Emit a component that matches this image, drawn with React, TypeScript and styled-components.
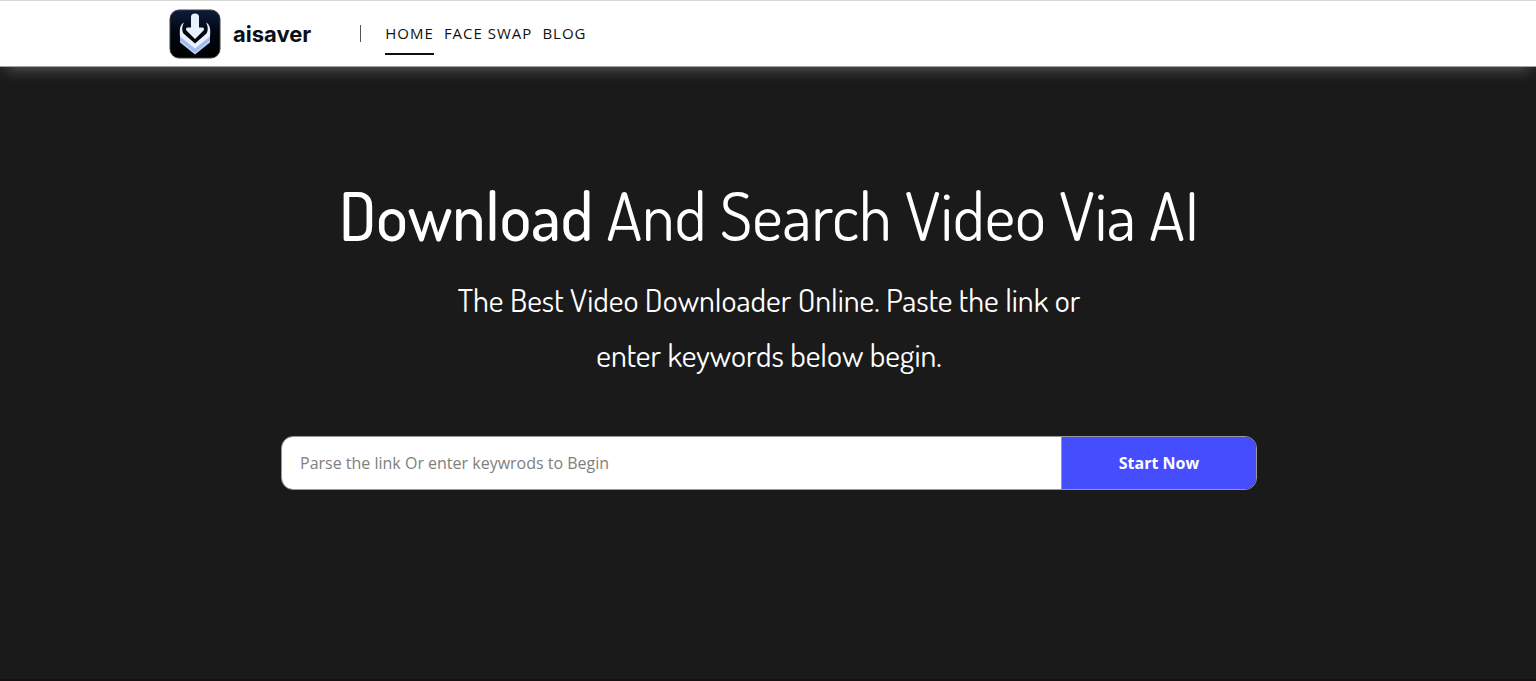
import React from "react";
import styled, { createGlobalStyle } from "styled-components";

const GlobalStyle = createGlobalStyle`
  *, *::before, *::after { box-sizing: border-box; }
  body {
    margin: 0;
    background: #1a1a1a;
    font-family: "Open Sans", sans-serif;
  }
  #root {
    display: flex;
    flex-direction: column;
    min-height: 100vh;
  }
`;

const Header = styled.header`
  position: relative;
  background: #fff;
  border-top: 1px solid #d6d6d6;
  border-bottom: 1px solid #a3a3a3;
  box-shadow: 0 8px 14px -6px rgba(255, 255, 255, 0.3);
`;

const HeaderInner = styled.div`
  display: flex;
  align-items: center;
  max-width: 1200px;
  height: 65px;
  margin: 0 auto;
`;

const Brand = styled.a`
  display: flex;
  align-items: center;
  gap: 11px;
  color: #0b0f18;
  font-family: Inter, sans-serif;
  font-size: 22px;
  font-weight: 700;
  line-height: 32px;
  text-decoration: none;
`;

const Divider = styled.span`
  width: 1px;
  height: 17px;
  margin: 0 24px 0 49px;
  background: #555;
`;

const Nav = styled.nav`
  display: flex;
  gap: 10px;
`;

const NavLink = styled.a<{ $active?: boolean }>`
  padding: 11px 0 10px;
  border-bottom: 2px solid ${(p) => (p.$active ? "#111" : "transparent")};
  color: #111;
  font-size: 15px;
  font-weight: 500;
  letter-spacing: 1px;
  line-height: 20px;
  text-decoration: none;
`;

const Hero = styled.main`
  flex: 1;
  display: flex;
  flex-direction: column;
  align-items: center;
  padding: 108px 22px 0 24px;
  border-bottom: 2px solid #151014;
  color: #fff;
  text-align: center;
  font-family: Dosis, "Liberation Sans Narrow", Roboto, sans-serif;
`;

const Title = styled.h1`
  margin: 0;
  font-size: 66px;
  font-weight: 400;
  line-height: 80px;

  strong { font-weight: 500; }
`;

const Subtitle = styled.p`
  max-width: 680px;
  margin: 17px 0 0;
  font-size: 32px;
  line-height: 55px;
`;

const SearchForm = styled.form`
  display: flex;
  width: 100%;
  max-width: 976px;
  height: 54px;
  margin-top: 54px;
  border: 1px solid #999;
  border-radius: 12px;
  overflow: hidden;
`;

const SearchInput = styled.input`
  flex: 1;
  min-width: 0;
  padding: 0 18px;
  border: 0;
  border-right: 1px solid #999;
  background: #fff;
  color: #222;
  font-family: "Open Sans", sans-serif;
  font-size: 16px;

  &::placeholder { color: #808080; opacity: 1; }
`;

const SearchButton = styled.button`
  flex: 0 0 194px;
  border: 0;
  background: #464dff;
  color: #fff;
  font-family: "Open Sans", sans-serif;
  font-size: 16px;
  font-weight: 700;
  cursor: pointer;

  @media (max-width: 640px) { flex-basis: 120px; }
`;

const LogoMark = () => (
  <svg width="54" height="52" viewBox="0 0 54 52" aria-hidden="true">
    <defs>
      <linearGradient id="tile" x1="0" y1="0" x2="0" y2="1">
        <stop offset="0" stopColor="#0c1d3c" />
        <stop offset="0.45" stopColor="#020711" />
        <stop offset="1" stopColor="#000" />
      </linearGradient>
    </defs>
    <rect x="2" y="2" width="50" height="48" rx="9" fill="url(#tile)" stroke="#3a3d43" strokeWidth="1" />
    <path d="M12 25 L27 37 L42 25 V34.500 L27 46.500 L12 34.500 Z" fill="#a0bdec" />
    <path d="M16 14.500 C11.500 17 11.500 22 12 28.500 L27 40.500 L42 28.500 C42.500 22 42.500 17 38 14.500 C40.500 19 40 23 38.500 25.500 L27 35.500 L15.500 25.500 C14 23 13.500 19 16 14.500 Z" fill="#eaf2ff" />
    <path d="M12.500 33.500 L27 45.500 L41.500 33.500" fill="none" stroke="#d3e2fb" strokeWidth="1" />
    <path d="M23 9 Q23 5.500 27 5.500 Q31 5.500 31 9 V19.500 H34.500 Q37 20 35.500 22.500 L27 31 L18.500 22.500 Q17 20 19.500 19.500 H23 Z" fill="#e8f0fe" />
  </svg>
);

export default function App() {
  return (
    <>
      <GlobalStyle />
      <Header>
        <HeaderInner>
          <Brand href="#">
            <LogoMark />
            <span>aisaver</span>
          </Brand>
          <Divider />
          <Nav aria-label="Main">
            <NavLink href="#" $active aria-current="page">HOME</NavLink>
            <NavLink href="#face-swap">FACE SWAP</NavLink>
            <NavLink href="#blog">BLOG</NavLink>
          </Nav>
        </HeaderInner>
      </Header>
      <Hero>
        <Title>
          <strong>Download</strong> And Search Video Via AI
        </Title>
        <Subtitle>
          The Best Video Downloader Online. Paste the link or enter keywords below begin.
        </Subtitle>
        <SearchForm onSubmit={(e) => e.preventDefault()}>
          <SearchInput
            type="text"
            aria-label="Video link or keywords"
            placeholder="Parse the link Or enter keywrods to Begin"
          />
          <SearchButton type="submit">Start Now</SearchButton>
        </SearchForm>
      </Hero>
    </>
  );
}
